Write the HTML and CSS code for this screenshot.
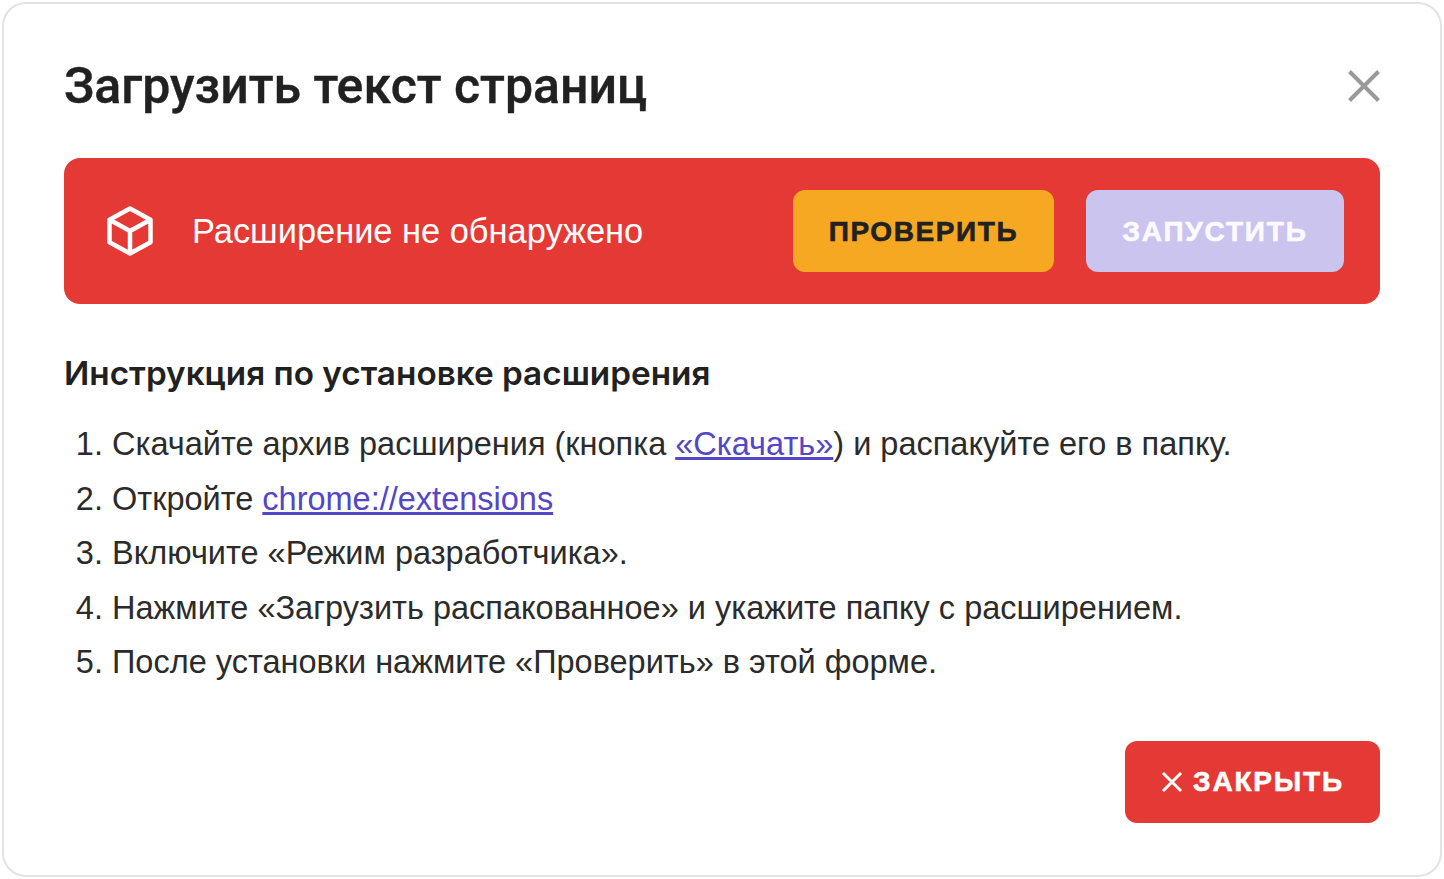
FILE: index.html
```html
<!DOCTYPE html>
<html lang="ru">
<head>
<meta charset="utf-8">
<title>Загрузить текст страниц</title>
<link rel="stylesheet" href="styles.css">
</head>
<body>
<div class="modal">
  <header class="head">
    <h1 class="title">Загрузить текст страниц</h1>
    <svg class="close" viewBox="0 0 32 32" width="32" height="32" aria-label="Закрыть"><path d="M1.500 1.500 30.500 30.500M30.500 1.500 1.500 30.500"/></svg>
  </header>
  <section class="banner">
    <svg class="cube" viewBox="0 0 48 50" width="48" height="50"><path d="M24 2.500 44.500 13.800V36.200L24 47.500 3.500 36.200V13.800Z M4 14 24 25 44 14 M24 25V47"/></svg>
    <span class="status">Расширение не обнаружено</span>
    <button class="btn check">ПРОВЕРИТЬ</button>
    <button class="btn run">ЗАПУСТИТЬ</button>
  </section>
  <h2 class="sub">Инструкция по установке расширения</h2>
  <ol class="steps">
    <li>Скачайте архив расширения (кнопка <a href="#">«Скачать»</a>) и распакуйте его в папку.</li>
    <li>Откройте <a href="#">chrome://extensions</a></li>
    <li>Включите «Режим разработчика».</li>
    <li>Нажмите «Загрузить распакованное» и укажите папку с расширением.</li>
    <li>После установки нажмите «Проверить» в этой форме.</li>
  </ol>
  <footer class="foot">
    <button class="btn shut"><svg class="x" viewBox="0 0 22 22" width="22" height="22"><path d="M2 2 20 20M20 2 2 20"/></svg>ЗАКРЫТЬ</button>
  </footer>
</div>
</body>
</html>
```
FILE: styles.css
```css
* { box-sizing: border-box; }
html, body { margin: 0; height: 100%; background: #fff; }
body { padding: 2px; font-family: "Liberation Sans", Arial, sans-serif; color: #212121; overflow: hidden; }
.modal {
  width: 1440px; height: 875px;
  border: 2px solid #e3e3e5; border-radius: 24px;
  padding: 52px 60px 52px;
  display: flex; flex-direction: column;
}
.head { display: flex; justify-content: space-between; align-items: center; height: 60px; }
.title { margin: 0; font-family: Roboto, "Liberation Sans", sans-serif; font-size: 50px; line-height: 60px; font-weight: 500; -webkit-text-stroke: 0.4px #212121; }
.close { fill: none; stroke: #999; stroke-width: 4; }
.banner {
  margin-top: 42px; height: 146px; background: #e53935; border-radius: 16px;
  padding: 0 36px 0 42px; display: flex; align-items: center; color: #fff;
}
.cube { fill: none; stroke: #fff; stroke-width: 4.500; stroke-linejoin: round; flex: none; }
.status { margin-left: 38px; font-size: 34.400px; flex: 1; }
.btn {
  height: 82px; border: 0; border-radius: 12px; font-family: inherit; font-weight: 700;
  font-size: 28px; letter-spacing: 1.800px; padding: 2px 0 0; display: flex; align-items: center; justify-content: center;
  -webkit-text-stroke: 0.6px currentColor;
}
.check { width: 261px; background: #f7a823; color: #212121; letter-spacing: 1.600px; }
.run { width: 258px; margin-left: 32px; background: #cac4ef; color: #fbfaff; }
.sub { margin: 48px 0 0; font-family: Inter, "Liberation Sans", sans-serif; font-size: 33.300px; line-height: 42px; font-weight: 600; }
.steps { margin: 23px 0 0; padding: 0 0 0 48px; font-size: 32.500px; line-height: 54.500px; color: #2b2b2b; }
.steps a { color: #5346c8; }
.foot { margin-top: auto; display: flex; justify-content: flex-end; }
.shut { width: 255px; height: 82px; padding-top: 0; background: #e53935; color: #fff; gap: 10px; }
.x { fill: none; stroke: #fff; stroke-width: 3; }
```
